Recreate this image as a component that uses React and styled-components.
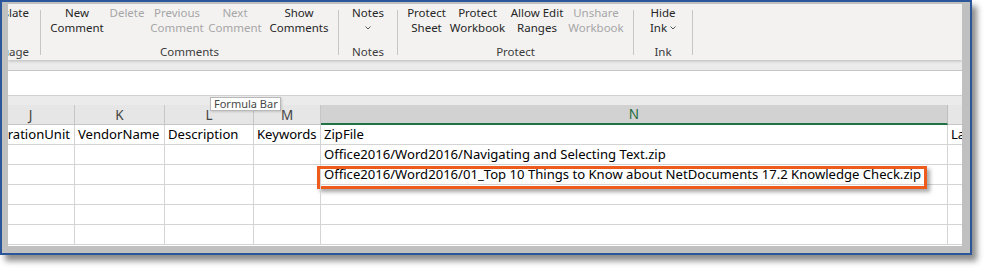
import React from "react";
import styled, { createGlobalStyle } from "styled-components";

const Global = createGlobalStyle`
  html, body { margin: 0; padding: 0; background: #fff; }
  body { font-family: "Noto Sans", "Open Sans", sans-serif; }
`;

const Page = styled.div`
  width: 986px;
  height: 270px;
  overflow: hidden;
  background: #fff;
`;

const Window = styled.div`
  box-sizing: border-box;
  width: 972px;
  height: 255px;
  border: 2px solid #2b579a;
  background: #c0c0c0;
  padding: 2px 8px 7px 6px;
  box-shadow: 5px 6px 6px rgba(0, 0, 0, 0.45);
  display: flex;
  flex-direction: column;
`;

const Content = styled.div`
  flex: 1;
  display: flex;
  flex-direction: column;
  overflow: hidden;
  background: #fff;
  position: relative;
`;

/* ---------- Ribbon ---------- */
const Ribbon = styled.div`
  height: 56px;
  flex-shrink: 0;
  background: #f3f2f1;
  display: flex;
  position: relative;
  z-index: 1;
  box-shadow: 0 1px 3px rgba(0, 0, 0, 0.22);
  font-size: 11.5px;
  color: #262626;
`;

const Group = styled.div`
  width: ${(p) => p.$w}px;
  flex-shrink: 0;
  display: flex;
  flex-direction: column;
  overflow: hidden;
`;

const Buttons = styled.div`
  height: 39px;
  padding-top: 1px;
  display: flex;
  justify-content: ${(p) => (p.$end ? "flex-end" : "flex-start")};
  padding-left: ${(p) => p.$pl || 0}px;
  padding-right: ${(p) => p.$pr || 0}px;
`;

const Button = styled.div`
  width: ${(p) => (p.$w ? `${p.$w}px` : "auto")};
  flex: ${(p) => (p.$w ? "0 0 auto" : "1 1 auto")};
  display: flex;
  flex-direction: column;
  align-items: ${(p) => (p.$end ? "flex-end" : "center")};
  color: ${(p) => (p.$disabled ? "#a6a6a6" : "#262626")};
`;

const Line = styled.div`
  height: 15px;
  line-height: 15px;
  white-space: nowrap;
  display: flex;
  align-items: center;
  gap: 3px;
`;

const GroupLabel = styled.div`
  height: 16px;
  line-height: 16px;
  display: flex;
  justify-content: ${(p) => (p.$end ? "flex-end" : "center")};
  padding-right: ${(p) => p.$pr || 0}px;
  white-space: nowrap;
  color: #3b3b3b;
`;

const Sep = styled.div`
  width: 1px;
  flex-shrink: 0;
  margin: 6px 0 5px;
  background: #c8c6c4;
`;

const Chevron = () => (
  <svg width="6" height="4" viewBox="0 0 6 4">
    <polyline points="0.5,0.5 3,3 5.5,0.5" fill="none" stroke="#555" strokeWidth="1" />
  </svg>
);

/* ---------- Bands / formula bar ---------- */
const Band = styled.div`
  height: ${(p) => p.$h}px;
  flex-shrink: 0;
  background: #ebebeb;
`;

const FormulaBar = styled.div`
  height: 26px;
  flex-shrink: 0;
  box-sizing: border-box;
  background: #fff;
  border-top: 1px solid #c6c6c6;
  border-bottom: 1px solid #d0d0d0;
`;

const Tooltip = styled.div`
  position: absolute;
  left: 202px;
  top: 93px;
  z-index: 3;
  background: #fff;
  border: 1px solid #b8b8b8;
  padding: 0 2px 0 3px;
  font-size: 11px;
  line-height: 12px;
  color: #484848;
  box-shadow: 1px 1px 2px rgba(0, 0, 0, 0.15);
  white-space: nowrap;
`;

/* ---------- Sheet ---------- */
const Sheet = styled.div`
  display: grid;
  grid-template-columns: 88px 90px 89px 67px 627px 80px;
  grid-auto-rows: 20px;
  margin-left: -21px;
  font-size: 13.1px;
`;

const Head = styled.div`
  box-sizing: border-box;
  background: ${(p) => (p.$sel ? "#d2d2d2" : "#e6e6e6")};
  color: ${(p) => (p.$sel ? "#1e6b41" : "#444")};
  border-right: 1px solid ${(p) => (p.$sel ? "#bdbdbd" : "#c6c6c6")};
  border-bottom: ${(p) => (p.$sel ? "2px solid #217346" : "1px solid #c6c6c6")};
  display: flex;
  align-items: center;
  justify-content: center;
  line-height: 18px;
  font-size: 13.5px;
`;

const Cell = styled.div`
  box-sizing: border-box;
  position: relative;
  border-right: 1px solid #d4d4d4;
  border-bottom: 1px solid #d4d4d4;
  padding-left: 3px;
  line-height: 19px;
  white-space: nowrap;
  color: #000;
`;

const Highlight = styled.div`
  position: absolute;
  left: -4px;
  top: 1px;
  width: 610px;
  height: 23px;
  box-sizing: border-box;
  border: 3px solid #ee5c1d;
  box-shadow: 3px 3px 4px rgba(0, 0, 0, 0.35);
  pointer-events: none;
`;

const Row = styled.div`
  display: contents;
`;

const columns = ["J", "K", "L", "M", "N", ""];

const rows = [
  ["DurationUnit", "VendorName", "Description", "Keywords", "ZipFile", "La"],
  ["", "", "", "", "Office2016/Word2016/Navigating and Selecting Text.zip", ""],
  ["", "", "", "", "Office2016/Word2016/01_Top 10 Things to Know about NetDocuments 17.2 Knowledge Check.zip", ""],
  ["", "", "", "", "", ""],
  ["", "", "", "", "", ""],
  ["", "", "", "", "", ""],
];

export default function App() {
  return (
    <Page>
      <Global />
      <Window>
        <Content>
          <Ribbon>
            <Group $w={32}>
              <Buttons $end $pr={11}>
                <Button $end>
                  <Line>Translate</Line>
                  <Line>&nbsp;</Line>
                </Button>
              </Buttons>
              <GroupLabel $end $pr={11}>Language</GroupLabel>
            </Group>
            <Sep />
            <Group $w={297}>
              <Buttons $pl={6}>
                <Button $w={60}>
                  <Line>New</Line>
                  <Line>Comment</Line>
                </Button>
                <Button $w={40} $disabled>
                  <Line>Delete</Line>
                  <Line>&nbsp;</Line>
                </Button>
                <Button $w={60} $disabled>
                  <Line>Previous</Line>
                  <Line>Comment</Line>
                </Button>
                <Button $w={56} $disabled>
                  <Line>Next</Line>
                  <Line>Comment</Line>
                </Button>
                <Button $w={72}>
                  <Line>Show</Line>
                  <Line>Comments</Line>
                </Button>
              </Buttons>
              <GroupLabel>Comments</GroupLabel>
            </Group>
            <Sep />
            <Group $w={58}>
              <Buttons>
                <Button>
                  <Line>Notes</Line>
                  <Line>
                    <Chevron />
                  </Line>
                </Button>
              </Buttons>
              <GroupLabel>Notes</GroupLabel>
            </Group>
            <Sep />
            <Group $w={235}>
              <Buttons $pl={3}>
                <Button $w={51}>
                  <Line>Protect</Line>
                  <Line>Sheet</Line>
                </Button>
                <Button $w={51}>
                  <Line>Protect</Line>
                  <Line>Workbook</Line>
                </Button>
                <Button $w={68}>
                  <Line>Allow Edit</Line>
                  <Line>Ranges</Line>
                </Button>
                <Button $w={50} $disabled>
                  <Line>Unshare</Line>
                  <Line>Workbook</Line>
                </Button>
              </Buttons>
              <GroupLabel>Protect</GroupLabel>
            </Group>
            <Sep />
            <Group $w={58}>
              <Buttons>
                <Button>
                  <Line>Hide</Line>
                  <Line>
                    Ink <Chevron />
                  </Line>
                </Button>
              </Buttons>
              <GroupLabel>Ink</GroupLabel>
            </Group>
            <Sep />
          </Ribbon>
          <Band $h={10} />
          <FormulaBar />
          <Band $h={9} />
          <Sheet>
            {columns.map((c, i) => (
              <Head key={i} $sel={c === "N"}>
                {c}
              </Head>
            ))}
            {rows.map((r, ri) => (
              <Row key={ri}>
                {r.map((v, ci) => (
                  <Cell key={ci}>
                    {v}
                    {ri === 2 && ci === 4 && <Highlight />}
                  </Cell>
                ))}
              </Row>
            ))}
          </Sheet>
          <Tooltip>Formula Bar</Tooltip>
        </Content>
      </Window>
    </Page>
  );
}
